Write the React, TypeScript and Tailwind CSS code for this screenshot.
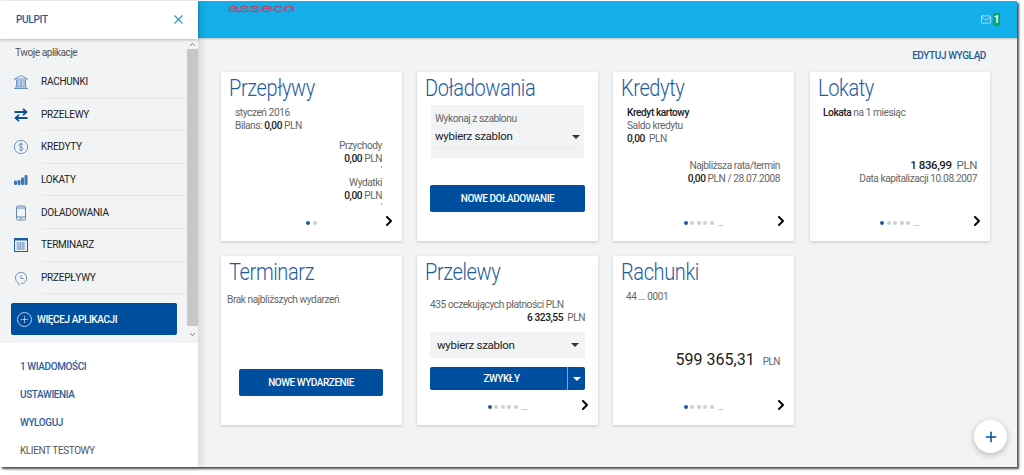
import { ChevronDown, ChevronRight, ChevronUp, Mail, Plus, X } from "lucide-react";
import type { ReactNode } from "react";

const BLUE = "text-[#1f5c9f]";

function BankIcon() {
  return (
    <svg viewBox="0 0 16 16" className="h-[16px] w-[16px]" fill="none" stroke="#5f87b8" strokeWidth="0.9">
      <path d="M1.5 5 8 1.5 14.5 5zM1 14.5h14M2 13h12" />
      <path d="M3.5 6v6.5M5 6v6.5M7.2 6v6.5M8.8 6v6.5M11 6v6.5M12.5 6v6.5" />
    </svg>
  );
}

function TransferIcon() {
  return (
    <svg viewBox="0 0 16 16" className="h-[16px] w-[16px]" fill="none" stroke="#0f4f96" strokeWidth="1.8">
      <path d="M1.5 5h11M10 1.8 13.5 5 10 8.2" />
      <path d="M14.5 11h-11M6 7.8 2.500 11 6 14.200" />
    </svg>
  );
}

function DollarIcon() {
  return (
    <svg viewBox="0 0 16 16" className="h-[16px] w-[16px]" fill="none" stroke="#5f87b8" strokeWidth="0.9">
      <circle cx="8" cy="8" r="6.600" />
      <path d="M10 5.800C9.500 5 8.600 4.800 8 4.800c-1.200 0-2 .6-2 1.500C6 8.400 10 7.600 10 9.700c0 .9-.9 1.500-2 1.500-.8 0-1.600-.3-2.100-1M8 3.600v8.800" />
    </svg>
  );
}

function BarsIcon() {
  return (
    <svg viewBox="0 0 16 16" className="h-[16px] w-[16px]" fill="#3f76b5">
      <rect x="1" y="8.500" width="3" height="4.500" rx="1.200" />
      <rect x="4.500" y="8" width="3" height="5" rx="1.200" />
      <rect x="8" y="5.500" width="3" height="7.500" rx="1" />
      <rect x="11.500" y="3" width="3" height="10" rx="1" />
    </svg>
  );
}

function PhoneIcon() {
  return (
    <svg viewBox="0 0 16 16" className="h-[16px] w-[16px]" fill="none" stroke="#5f87b8" strokeWidth="1">
      <rect x="3.500" y="1" width="9" height="14" rx="1.500" />
      <path d="M3.500 12h9M3.500 3h9" />
      <circle cx="8" cy="13.500" r="0.500" />
    </svg>
  );
}

function CalendarIcon() {
  return (
    <svg viewBox="0 0 16 16" className="h-[16px] w-[16px]" fill="none" stroke="#1f5c9f" strokeWidth="1">
      <rect x="1.500" y="1.500" width="13" height="13" />
      <path d="M1.500 2.500h13" strokeWidth="2" />
      <path d="M3.500 6h9M3.500 8h9M3.500 10h9M3.500 12h9M5 5v8M7.500 5v8M10 5v8" strokeWidth="0.7" stroke="#5f87b8" />
    </svg>
  );
}

function ClockIcon() {
  return (
    <svg viewBox="0 0 16 16" className="h-[16px] w-[16px]" fill="none" stroke="#5f87b8" strokeWidth="0.9">
      <path d="M5 12.600A5.600 5.600 0 1 1 8 13.500M5 12.600 6.500 15.500" />
      <path d="M8 5V8.500H10.800" />
    </svg>
  );
}

const apps: { label: string; icon: ReactNode }[] = [
  { label: "RACHUNKI", icon: <BankIcon /> },
  { label: "PRZELEWY", icon: <TransferIcon /> },
  { label: "KREDYTY", icon: <DollarIcon /> },
  { label: "LOKATY", icon: <BarsIcon /> },
  { label: "DOŁADOWANIA", icon: <PhoneIcon /> },
  { label: "TERMINARZ", icon: <CalendarIcon /> },
  { label: "PRZEPŁYWY", icon: <ClockIcon /> },
];

function Sidebar() {
  return (
    <aside className="z-10 flex h-full w-[198px] shrink-0 flex-col bg-white shadow-[3px_0_8px_rgba(0,0,0,0.12)]">
      <div className="z-10 flex h-[38px] shrink-0 items-center justify-between bg-white pb-[2px] pl-[16px] pr-[12px] shadow-[0_1px_3px_rgba(0,0,0,0.25)]">
        <span className="text-[10px] font-medium tracking-[-0.3px] text-[#1f5c9f]">PULPIT</span>
        <X className="h-[15px] w-[15px] text-[#1a9ad0]" strokeWidth={1.75} />
      </div>
      <div className="flex h-[304px] shrink-0 bg-[#f1f3f4]">
        <div className="flex w-[187px] flex-col pt-[6px]">
          <div className="pl-[15px] text-[10.200px] leading-[15px] tracking-[-0.5px] text-[#555]">Twoje aplikacje</div>
          <div className="mt-[6px] flex flex-col">
            {apps.map((a) => (
              <div key={a.label} className="flex h-[32.600px] items-center">
                <div className="flex w-[41px] shrink-0 justify-center">{a.icon}</div>
                <div className="flex h-full flex-1 items-center border-b border-[#e4e6e7] text-[10px] tracking-[-0.25px] text-[#222]">
                  {a.label}
                </div>
              </div>
            ))}
          </div>
          <div className="ml-[11px] mr-[10px] mt-[9px] flex h-[32px] items-center rounded-[2px] bg-[#004f9f] pl-[6px] text-white">
            <span className="flex h-[15px] w-[15px] items-center justify-center rounded-full border border-[#b5cde6]">
              <Plus className="h-[11px] w-[11px]" strokeWidth={1.25} />
            </span>
            <span className="ml-[5px] text-[10px] font-medium tracking-[-0.4px]">WIĘCEJ APLIKACJI</span>
          </div>
        </div>
        <div className="flex w-[11px] flex-col text-[#555]">
          <div className="flex h-[10px] items-center justify-center">
            <ChevronUp className="h-[9px] w-[9px]" strokeWidth={2} />
          </div>
          <div className="h-[277px] bg-[#c6c8c8]" />
          <div className="flex h-[17px] items-center justify-center">
            <ChevronDown className="h-[9px] w-[9px]" strokeWidth={2} />
          </div>
        </div>
      </div>
      <div className="flex flex-1 flex-col pl-[20px] pt-[9px] text-[10px] font-medium tracking-[-0.4px]">
        <div className="flex h-[28px] items-center text-[#2d5e9e]">1 WIADOMOŚCI</div>
        <div className="flex h-[28px] items-center text-[#2d5e9e]">USTAWIENIA</div>
        <div className="flex h-[28px] items-center text-[#2d5e9e]">WYLOGUJ</div>
        <div className="flex h-[28px] items-center font-normal text-[#555]">KLIENT TESTOWY</div>
      </div>
    </aside>
  );
}

function Dots({ count }: { count: number }) {
  return (
    <div className="flex items-center gap-[2.500px]">
      {Array.from({ length: count }).map((_, i) => (
        <span
          key={i}
          className={i === 0 ? "h-[4px] w-[4px] rounded-full bg-[#1f5c9f]" : "h-[4px] w-[4px] rounded-full bg-[#ccd0d3]"}
        />
      ))}
      {count > 2 && <span className="ml-[1px] text-[9px] leading-[8px] text-[#777]">...</span>}
    </div>
  );
}

function Footer({ count }: { count: number }) {
  return (
    <div className="mb-[12px] mt-auto grid h-[16px] grid-cols-[1fr_auto_1fr] items-center">
      <span />
      <div className="pt-[4px]">
        <Dots count={count} />
      </div>
      <ChevronRight className="mr-[5px] h-[16px] w-[16px] justify-self-end text-black" strokeWidth={3} />
    </div>
  );
}

function Card({ title, className = "", children }: { title: string; className?: string; children: ReactNode }) {
  return (
    <div className={`flex h-[169px] flex-col bg-white shadow-[0_1px_3px_rgba(0,0,0,0.18)] ${className}`}>
      <div className="pl-[8px] pt-[4px]">
        <h2 className={`origin-left scale-x-[0.87] text-[23px] font-light leading-[26px] ${BLUE}`}>{title}</h2>
      </div>
      {children}
    </div>
  );
}

function Select({ label }: { label: string }) {
  return (
    <div className="flex items-center justify-between text-[11.500px] tracking-[-0.3px] text-[#222]">
      <span>{label}</span>
      <span className="h-0 w-0 border-x-[4px] border-t-[4px] border-x-transparent border-t-[#333]" />
    </div>
  );
}

function PrimaryButton({ label, className }: { label: string; className: string }) {
  return (
    <div className={`flex items-center justify-center rounded-[2px] bg-[#004f9f] text-[10px] font-medium tracking-[-0.45px] text-white ${className}`}>
      {label}
    </div>
  );
}

const Bold = ({ children }: { children: ReactNode }) => (
  <b className="font-medium text-[#222]">{children}</b>
);

const Tick = () => <div className="mt-[1px] h-[2px] w-px bg-[#aaa]" />;

function Cards() {
  return (
    <div className="grid grid-cols-[181px_181px_181px_181px] gap-x-[15px] gap-y-[15px] pl-[23px] text-[10.200px] leading-[13px] tracking-[-0.45px] text-[#666]">
      <Card title="Przepływy">
        <div className="pl-[14px] pt-[4px]">
          <div>styczeń 2016</div>
          <div>
            Bilans: <Bold>0,00</Bold> PLN
          </div>
        </div>
        <div className="flex flex-col items-end pr-[20px] pt-[7px] text-right">
          <div>Przychody</div>
          <div>
            <Bold>0,00</Bold> PLN
          </div>
          <Tick />
          <div className="mt-[8px]">Wydatki</div>
          <div>
            <Bold>0,00</Bold> PLN
          </div>
          <Tick />
        </div>
        <Footer count={2} />
      </Card>

      <Card title="Doładowania">
        <div className="mx-[14px] mt-[3px] h-[53px] bg-[#f1f3f4] px-[4px] pt-[7px]">
          <div>Wykonaj z szablonu</div>
          <div className="mt-[5px] border-b border-[#e6e8e9] pb-[5px]">
            <Select label="wybierz szablon" />
          </div>
        </div>
        <PrimaryButton label="NOWE DOŁADOWANIE" className="mx-[13px] mt-[27px] h-[27px]" />
      </Card>

      <Card title="Kredyty">
        <div className="pl-[14px] pt-[4px]">
          <div className="font-medium text-[#222]">Kredyt kartowy</div>
          <div>Saldo kredytu</div>
          <div>
            <Bold>0,00</Bold>&nbsp; PLN
          </div>
        </div>
        <div className="pr-[14px] pt-[14px] text-right">
          <div>Najbliższa rata/termin</div>
          <div>
            <Bold>0,00</Bold> PLN / 28.07.2008
          </div>
        </div>
        <Footer count={5} />
      </Card>

      <Card title="Lokaty" className="ml-[1px]">
        <div className="pl-[13px] pt-[4px]">
          <Bold>Lokata</Bold> na 1 miesiąc
        </div>
        <div className="pr-[13px] pt-[40px] text-right">
          <div className="text-[11.500px] tracking-[-0.4px]">
            <Bold>1 836,99</Bold>&nbsp; PLN
          </div>
          <div>Data kapitalizacji 10.08.2007</div>
        </div>
        <Footer count={5} />
      </Card>

      <Card title="Terminarz">
        <div className="pl-[6px] pt-[7px]">Brak najbliższych wydarzeń</div>
        <PrimaryButton label="NOWE WYDARZENIE" className="ml-[18px] mr-[19px] mt-[63px] h-[27px]" />
      </Card>

      <Card title="Przelewy">
        <div className="px-[13px] pt-[12px]">
          <div>435 oczekujących płatności PLN</div>
          <div className="text-right">
            <Bold>6 323,55</Bold>&nbsp; PLN
          </div>
        </div>
        <div className="mx-[13px] mt-[8px] flex h-[26px] flex-col justify-center bg-[#f1f3f4] pl-[7px] pr-[6px]">
          <Select label="wybierz szablon" />
        </div>
        <div className="mx-[13px] mt-[9px] flex h-[23px] rounded-[2px] bg-[#004f9f]">
          <div className="flex flex-1 items-center justify-center pl-[6px] text-[10px] font-medium tracking-[-0.45px] text-white">ZWYKŁY</div>
          <div className="flex w-[18px] items-center justify-center border-l border-[#7fa6d0]">
            <span className="h-0 w-0 border-x-[4px] border-t-[4px] border-x-transparent border-t-white" />
          </div>
        </div>
        <Footer count={5} />
      </Card>

      <Card title="Rachunki">
        <div className="pl-[13px] pt-[4px] text-[10px] tracking-[-0.4px]">44 ... 0001</div>
        <div className="flex items-baseline justify-end pr-[14px] pt-[47px]">
          <span className="text-[16px] leading-[20px] tracking-normal text-[#222]">599 365,31</span>
          <span className="ml-[8px] text-[10px] tracking-[-0.5px]">PLN</span>
        </div>
        <Footer count={5} />
      </Card>
    </div>
  );
}

export default function App() {
  return (
    <div className="h-[475px] w-[1024px] overflow-hidden bg-white pt-[1px] font-['Roboto',sans-serif]">
      <div className="flex h-[466px] w-[1017px] bg-[#f1f3f4] shadow-[2px_2px_2px_rgba(50,50,50,0.85)]">
        <Sidebar />
        <main className="relative flex-1">
          <header className="flex h-[37px] items-center justify-between bg-[#14aeea] pr-[17px] shadow-[0_1px_2px_rgba(0,0,0,0.2)]">
            <svg viewBox="0 0 68 14" className="ml-[30px] h-[14px] w-[68px] self-start">
              <text
                x="0"
                y="11"
                textLength="67"
                lengthAdjust="spacingAndGlyphs"
                fontSize="11"
                fontFamily="Liberation Sans"
                fill="#c8384e"
                fillOpacity="0.45"
                stroke="#c8384e"
                strokeWidth="0.3"
              >
                asseco
              </text>
            </svg>
            <div className="flex items-center gap-[1px]">
              <Mail className="h-[11px] w-[12px] text-[#d8f0fb]" strokeWidth={1.5} />
              <span className="flex h-[13px] w-[7px] items-center justify-center rounded-[1px] bg-[#13a35f] text-[10px] font-bold text-white">
                1
              </span>
            </div>
          </header>
          <div className="flex h-[34px] items-center justify-end pr-[31px] text-[10px] font-medium tracking-[-0.4px] text-[#2a5a96]">
            EDYTUJ WYGLĄD
          </div>
          <Cards />
          <button className="absolute left-[776px] top-[419px] flex h-[33px] w-[33px] items-center justify-center rounded-full bg-white shadow-[0_2px_6px_rgba(0,0,0,0.25)]">
            <Plus className="h-[16px] w-[16px] text-[#004f9f]" strokeWidth={2.25} />
          </button>
        </main>
      </div>
    </div>
  );
}
